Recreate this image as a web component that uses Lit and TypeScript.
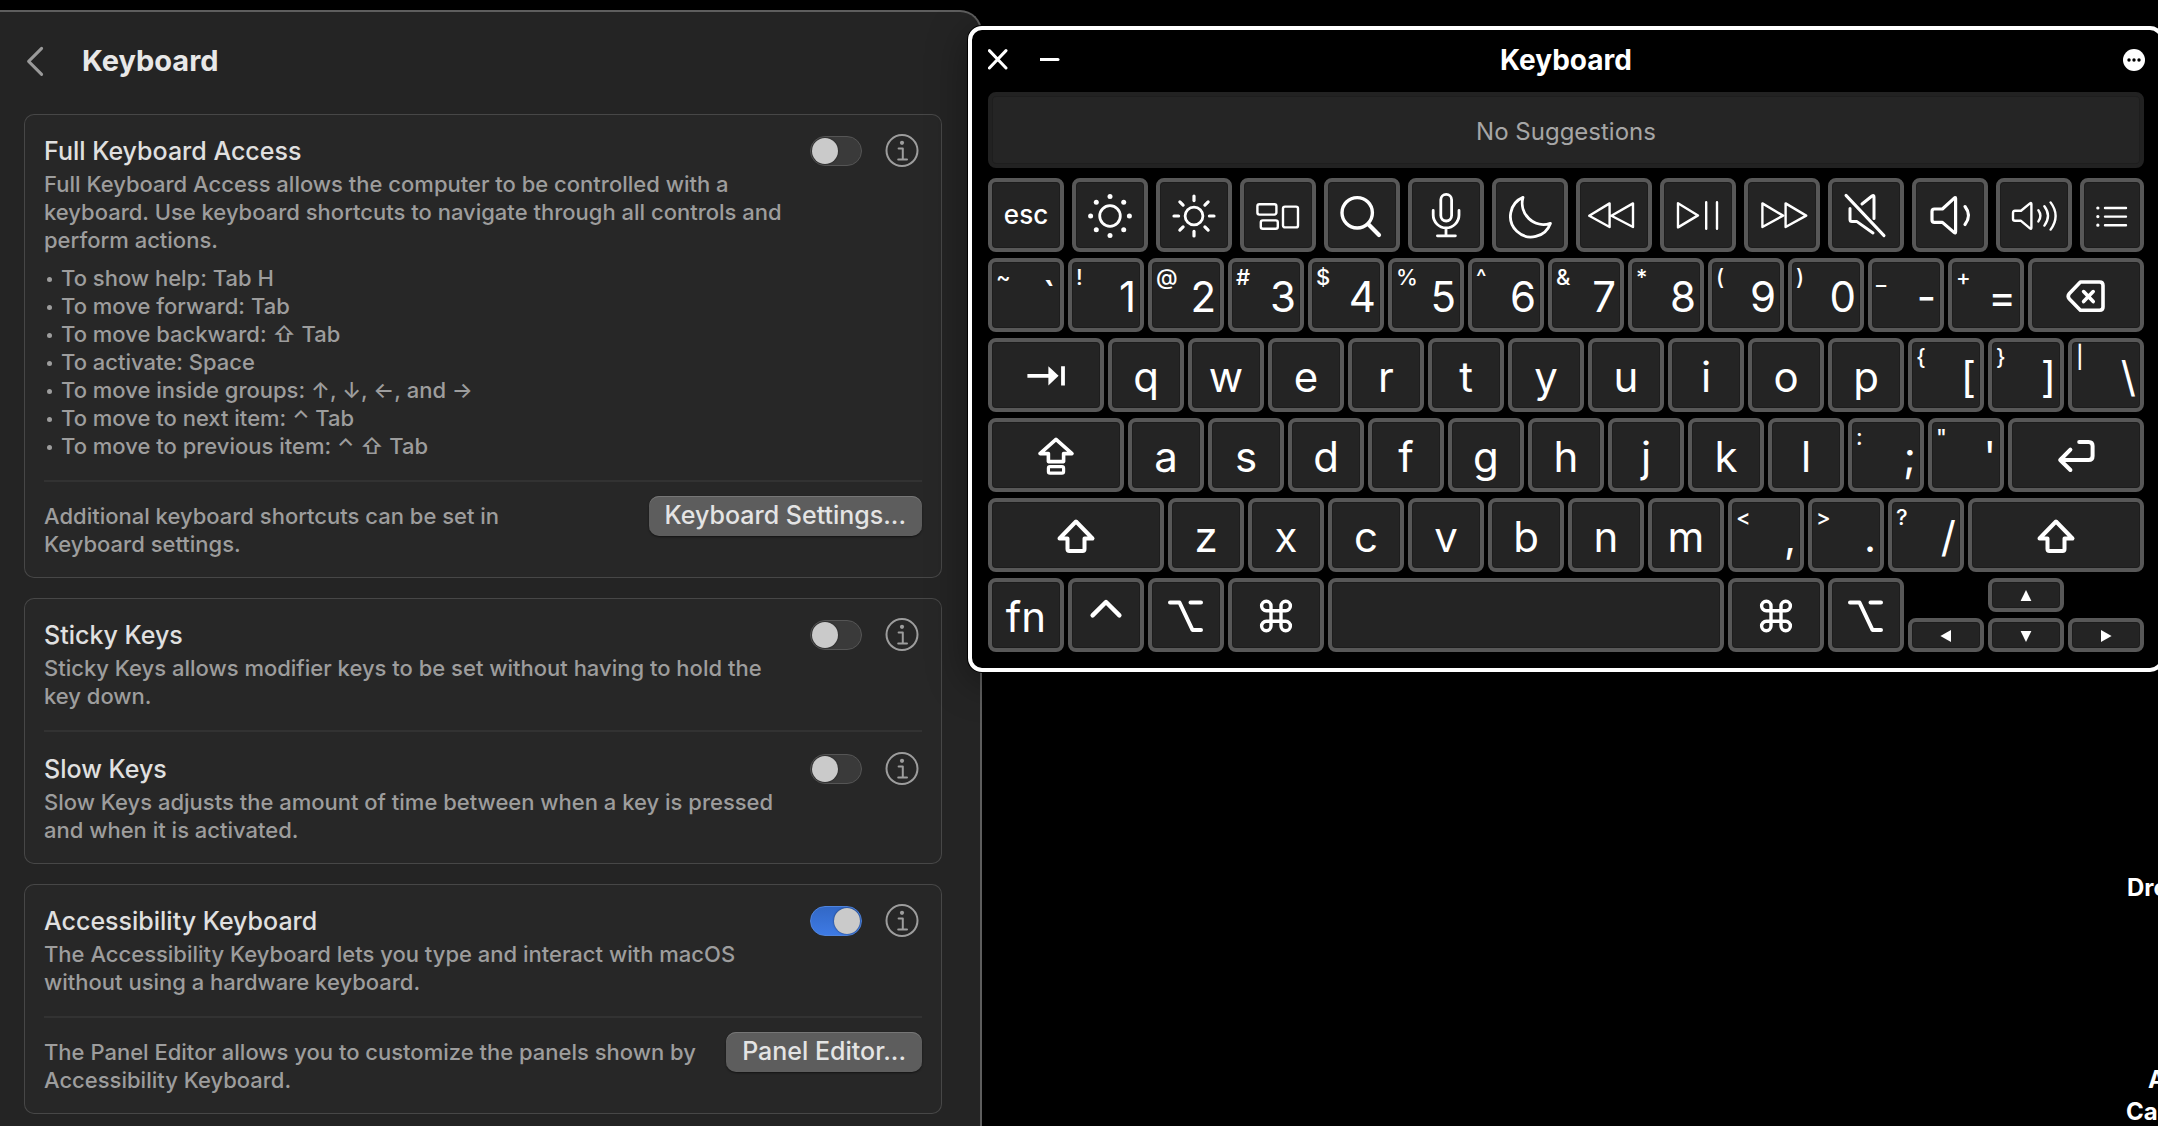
import { LitElement, html, svg, css, nothing, type TemplateResult, type SVGTemplateResult } from "lit";
import { customElement, property } from "lit/decorators.js";
import { classMap } from "lit/directives/class-map.js";
import { styleMap } from "lit/directives/style-map.js";

/* Key glyphs, drawn around the origin of a 56 x 56 box. */
const rays = (angles: number[], from: number, to: number) =>
  angles.map((a) => {
    const x = Math.cos((a * Math.PI) / 180);
    const y = Math.sin((a * Math.PI) / 180);
    return svg`<line x1=${x * from} y1=${y * from + 1} x2=${x * to} y2=${y * to + 1} />`;
  });

const EIGHT = [0, 45, 90, 135, 180, 225, 270, 315];

const shiftIcon = svg`<path stroke-width="4" d="M0 -13.5 L16.5 3.5 H8.5 V14 Q8.5 16 6.5 16 H-6.5 Q-8.5 16 -8.5 14 V3.5 H-16.5 Z" />`;
const commandIcon = svg`<path stroke-width="3.4" d="M5 -9 V11 a4.7 4.7 0 1 0 4.7 -4.7 H-9.7 a4.7 4.7 0 1 0 4.7 4.7 V-9 a4.7 4.7 0 1 0 -4.7 4.7 H9.7 a4.7 4.7 0 1 0 -4.7 -4.7 Z" />`;
const optionIcon = svg`<path stroke-width="4" d="M-16 -12.5 H-6.5 L6.5 15 H15 M4.5 -12.5 H15" />`;

const ICONS: Record<string, SVGTemplateResult> = {
  dim: svg`<circle cy="1" r="10.3" stroke-width="2.8" />${EIGHT.map((a) => {
    const x = 19.4 * Math.cos((a * Math.PI) / 180);
    const y = 19.4 * Math.sin((a * Math.PI) / 180) + 1;
    return svg`<circle class="solid" cx=${x} cy=${y} r="2.5" />`;
  })}`,
  bright: svg`<circle cy="1" r="8.9" stroke-width="2.8" /><g stroke-width="3.2">${rays(EIGHT, 15.4, 20)}</g>`,
  mission: svg`<g stroke-width="2.4"><rect x="-20.6" y="-10.8" width="19" height="10.4" rx="2" /><rect x="-17.2" y="5.4" width="17" height="8.4" rx="2" /><rect x="5" y="-8.4" width="15" height="20.8" rx="2" /></g>`,
  search: svg`<circle cx="-4.8" cy="-2.2" r="15.2" stroke-width="3.4" /><path stroke-width="4.2" d="M6.6 9.6 L17 20" />`,
  mic: svg`<g stroke-width="2.8"><rect x="-5.2" y="-20.6" width="10.8" height="26.6" rx="5.4" /><path d="M-12.8 -4.6 V0 a12.8 12.8 0 0 0 25.8 0 V-4.6 M0 13 V20.8 M-8.6 20.8 H9.4" /></g>`,
  moon: svg`<path stroke-width="2.8" d="M-7 -17.6 A20.6 20.6 0 1 0 20.4 8.4 A21.4 21.4 0 0 1 -7 -17.6 Z" />`,
  rewind: svg`<path stroke-width="2.4" d="M-4.4 -11.6 V12 L-24.8 0.8 Z M19 -11.6 V12 L-2.6 0.8 Z" />`,
  playpause: svg`<path stroke-width="2.4" d="M-20 -11.8 V12.4 L0 0.4 Z M8.2 -12.8 V13.8 M19 -12.8 V13.8" />`,
  forward: svg`<path stroke-width="2.4" d="M-19.6 -11.6 V12 L1 0.6 Z M3.6 -11.6 V12 L24.2 0.6 Z" />`,
  mute: svg`<g stroke-width="3"><path d="M-20 -19.6 L18 20.6 M-4 -11 L6 -19 Q8 -20.4 8 -18 V3.6 M-16 -6.6 V4.4 Q-16 6.4 -14 6.4 H-9.4 L7 18" /></g>`,
  voldown: svg`<g stroke-width="3.2"><path d="M5.6 -16.6 V16.8 Q5.6 18.8 4 17.4 L-7.6 7.4 H-15.6 Q-18 7.4 -18 5 V-3.6 Q-18 -6 -15.6 -6 H-7.6 L4 -16.6 Q5.6 -18 5.6 -16.6 Z" /><path d="M15 -8.4 Q22 0.6 15 9.6" /></g>`,
  volup: svg`<g stroke-width="2.4"><path d="M-2.6 -11 V12.6 Q-2.6 14.6 -4 13.4 L-13 5.8 H-19 Q-21 5.8 -21 3.8 V-2 Q-21 -4.2 -19 -4.2 H-13 L-4 -11.6 Q-2.6 -12.6 -2.6 -11 Z" /><path d="M4.4 -4.8 Q8.4 0.8 4.4 6.4 M10.4 -8.8 Q17.6 0.8 10.4 10.6 M16.6 -12.6 Q26.6 0.8 16.6 14.6" /></g>`,
  list: svg`<g stroke-width="2.4"><path d="M-7 -7 H14 M-7 1.6 H14 M-7 10.2 H14" /><path stroke-width="3.2" d="M-14.2 -7 h0.1 M-14.2 1.6 h0.1 M-14.2 10.2 h0.1" /></g>`,
  backspace: svg`<path stroke-width="3.6" d="M-5.6 -13 H13.6 Q17 -13 17 -9.6 V12 Q17 15.2 13.6 15.2 H-5.6 L-16.6 4 Q-19 1.2 -16.6 -1.6 Z M-2.4 -3.4 L7.2 6.6 M7.2 -3.4 L-2.4 6.6" />`,
  tab: svg`<path stroke-width="3.8" stroke-linecap="butt" d="M-18.6 0.8 H3 M17 -8.8 V10.4" /><path class="solid" d="M2.4 -8.8 L12.6 0.8 L2.4 10.4 Z" />`,
  caps: svg`<path stroke-width="3.6" d="M0 -15.6 L16 -1.4 H7.6 V6.6 H-7.6 V-1.4 H-16 Z" /><rect x="-7.6" y="11.6" width="15.2" height="6.6" rx="1.6" stroke-width="3.2" />`,
  enter: svg`<path stroke-width="4" d="M3.2 -13 H12.6 Q16.6 -13 16.6 -9 V1 Q16.6 5 12.6 5 H-15 M-5.6 -5.4 L-15.8 5 L-5.6 15" />`,
  shift: shiftIcon,
  control: svg`<path stroke-width="4.4" d="M-13.4 0.4 L0 -13 L13.4 0.4" />`,
  option: optionIcon,
  command: commandIcon,
  up: svg`<path class="solid" d="M0 -5 L5.4 6 H-5.4 Z" />`,
  down: svg`<path class="solid" d="M0 7 L5.4 -4 H-5.4 Z" />`,
  left: svg`<path class="solid" d="M-5.6 1 L5 -5 V7 Z" />`,
  right: svg`<path class="solid" d="M5.6 1 L-5 -5 V7 Z" />`,
};

interface Key {
  w: number;
  main?: string;
  sub?: string;
  icon?: string;
  label?: string;
  small?: boolean;
}

const icon = (name: string, label: string, w = 76): Key => ({ w, icon: name, label });
const plain = (chars: string): Key[] => [...chars].map((main) => ({ w: 76, main }));
const dual = (pairs: string): Key[] => pairs.split(" ").map((p) => ({ w: 76, sub: p[0], main: p[1] }));

const ROWS: Key[][] = [
  dual("~` !1 @2 #3 $4 %5 ^6 &7 *8 (9 )0 _- +=").concat(icon("backspace", "Delete", 116)),
  [icon("tab", "Tab", 116), ...plain("qwertyuiop"), ...dual("{[ }] |\\")],
  [icon("caps", "Caps Lock", 136), ...plain("asdfghjkl"), ...dual(":; \"'"), icon("enter", "Return", 136)],
  [icon("shift", "Left Shift", 176), ...plain("zxcvbnm"), ...dual("<, >. ?/"), icon("shift", "Right Shift", 176)],
];

const FUNCTION_ROW: Key[] = [
  { w: 76, main: "esc", small: true },
  icon("dim", "Brightness Down"),
  icon("bright", "Brightness Up"),
  icon("mission", "Mission Control"),
  icon("search", "Spotlight"),
  icon("mic", "Dictation"),
  icon("moon", "Do Not Disturb"),
  icon("rewind", "Rewind"),
  icon("playpause", "Play or Pause"),
  icon("forward", "Fast Forward"),
  icon("mute", "Mute"),
  icon("voldown", "Volume Down"),
  icon("volup", "Volume Up"),
  icon("list", "Panels", 64),
];

const BOTTOM_ROW: Key[] = [
  { w: 76, main: "fn" },
  icon("control", "Control"),
  icon("option", "Left Option"),
  icon("command", "Left Command", 96),
  { w: 396, label: "Space" },
  icon("command", "Right Command", 96),
  icon("option", "Right Option"),
];

@customElement("accessibility-keyboard")
export class AccessibilityKeyboard extends LitElement {
  static styles = css`
    :host {
      display: flex;
      flex-direction: column;
      box-sizing: border-box;
      border: 4px solid #fff;
      border-radius: 14px;
      background: #000;
      padding: 0 16px 16px;
      color: #fff;
      box-shadow: 0 0 0 1px #000, 0 8px 40px rgba(0, 0, 0, 0.4);
    }
    .bar {
      display: grid;
      grid-template-columns: 1fr auto 1fr;
      align-items: center;
      height: 60px;
      margin-bottom: 2px;
    }
    .bar h2 {
      margin: 0;
      font-size: 28px;
      line-height: 34px;
      font-weight: 700;
    }
    .left {
      display: flex;
      gap: 28px;
    }
    .tool {
      display: block;
      padding: 0;
      border: 0;
      background: none;
      width: 24px;
      height: 24px;
    }
    .tool.more {
      justify-self: end;
    }
    .suggestions {
      box-sizing: border-box;
      height: 76px;
      border: 4px solid #222;
      border-radius: 8px;
      background: #252525;
      box-shadow: inset 0 0 0 1px #1e1e1e;
      display: flex;
      align-items: center;
      justify-content: center;
      margin-bottom: 10px;
      font-size: 24px;
      line-height: 28px;
      color: #a6a6a6;
      padding-top: 4px;
    }
    .rows {
      display: flex;
      flex-direction: column;
      gap: 6px;
    }
    .row {
      display: flex;
      gap: 4px;
      height: 74px;
    }
    .row.functions {
      gap: 8px;
    }
    .key {
      box-sizing: border-box;
      min-width: 0;
      min-height: 0;
      margin: 0;
      border: 4px solid #585858;
      border-radius: 8px;
      background: #242424;
      box-shadow: inset 0 0 0 1px #1d1d1d;
      padding: 0;
      display: flex;
      align-items: center;
      justify-content: center;
      overflow: hidden;
      font-family: inherit;
      color: #fff;
    }
    .key svg {
      flex: none;
    }
    .main {
      font-size: 42px;
      line-height: 62px;
      padding-top: 4px;
    }
    .small .main {
      font-size: 26px;
      font-weight: 500;
      padding-top: 0;
    }
    .dual {
      justify-content: space-between;
      align-items: flex-start;
      padding: 0 4px;
    }
    .sub {
      font-size: 22px;
      line-height: 30px;
      font-weight: 500;
    }
    .arrows {
      flex: 236 1 236px;
      display: grid;
      grid-template-columns: repeat(3, 1fr);
      grid-template-rows: 34px 34px;
      gap: 6px 4px;
      grid-template-areas: ". up ." "left down right";
    }
    .up {
      grid-area: up;
    }
    .left-arrow {
      grid-area: left;
    }
    .down {
      grid-area: down;
    }
    .right {
      grid-area: right;
    }
    .glyph {
      fill: none;
      stroke: #fff;
      stroke-linecap: round;
      stroke-linejoin: round;
    }
    .solid {
      fill: #fff;
      stroke: none;
    }
  `;

  private glyph(name: string): TemplateResult {
    return html`<svg class="glyph" width="56" height="56" viewBox="-28 -28 56 56" aria-hidden="true">${ICONS[name]}</svg>`;
  }

  private key(k: Key): TemplateResult {
    return html`<button
      type="button"
      class=${classMap({ key: true, dual: !!k.sub, small: !!k.small })}
      style=${styleMap({ flex: `${k.w} 1 ${k.w}px` })}
      aria-label=${k.label ?? nothing}
    >${k.sub ? html`<span class="sub">${k.sub}</span>` : nothing}${k.main
        ? html`<span class="main">${k.main}</span>`
        : nothing}${k.icon ? this.glyph(k.icon) : nothing}</button>`;
  }

  private arrow(area: string, name: string, label: string): TemplateResult {
    return html`<button type="button" class="key ${area}" aria-label=${label}>${this.glyph(name)}</button>`;
  }

  render() {
    return html`
      <div class="bar">
        <div class="left">
          <button class="tool" type="button" aria-label="Close">
            <svg class="glyph" width="24" height="24" viewBox="0 0 24 24"><path stroke-width="3" d="M1.4 2.6 L18 20 M18 2.6 L1.4 20" /></svg>
          </button>
          <button class="tool" type="button" aria-label="Minimize">
            <svg class="glyph" width="24" height="24" viewBox="0 0 24 24"><path stroke-width="3" d="M0.6 11.5 H18" /></svg>
          </button>
        </div>
        <h2>Keyboard</h2>
        <button class="tool more" type="button" aria-label="More">
          <svg width="26" height="24" viewBox="0 0 26 24"><circle cx="14" cy="12" r="11" fill="#fff" /><circle cx="9" cy="12" r="1.7" /><circle cx="14" cy="12" r="1.7" /><circle cx="19" cy="12" r="1.7" /></svg>
        </button>
      </div>
      <div class="suggestions">No Suggestions</div>
      <div class="rows">
        <div class="row functions">${FUNCTION_ROW.map((k) => this.key(k))}</div>
        ${ROWS.map((r) => html`<div class="row">${r.map((k) => this.key(k))}</div>`)}
        <div class="row">
          ${BOTTOM_ROW.map((k) => this.key(k))}
          <div class="arrows">
            ${this.arrow("up", "up", "Up")} ${this.arrow("left-arrow", "left", "Left")}
            ${this.arrow("down", "down", "Down")} ${this.arrow("right", "right", "Right")}
          </div>
        </div>
      </div>
    `;
  }
}

@customElement("setting-row")
export class SettingRow extends LitElement {
  @property() heading = "";
  @property() text = "";
  @property({ type: Boolean }) on = false;
  @property({ attribute: false }) items: string[] = [];

  static styles = css`
    :host {
      display: flex;
      align-items: flex-start;
      padding: 20px 3px 20px 0;
    }
    .body {
      flex: 1;
      min-width: 0;
      margin-right: 22px;
    }
    .title {
      display: block;
      font-size: 25px;
      line-height: 34px;
      font-weight: 500;
      color: #e0e0e0;
    }
    .text {
      margin: 2px 0 0;
      font-size: 22px;
      line-height: 28px;
      color: #9d9d9d;
    }
    .list {
      list-style: none;
      margin: 10px 0 0;
      padding: 0;
      font-size: 22px;
      line-height: 28px;
      color: #9d9d9d;
    }
    .list li {
      display: flex;
      align-items: center;
    }
    .list li::before {
      content: "";
      width: 5px;
      height: 5px;
      border-radius: 50%;
      background: #9d9d9d;
      margin: 2px 9px 0 3px;
    }
    .switch {
      appearance: none;
      box-sizing: border-box;
      flex: none;
      width: 52px;
      height: 30px;
      margin: 2px 0 0;
      border: 1px solid #555;
      border-radius: 15px;
      background: #3a3a3a;
      padding: 1px;
      display: flex;
    }
    .switch::before {
      content: "";
      width: 26px;
      height: 26px;
      border-radius: 50%;
      background: #cacaca;
      box-shadow: 0 0 2px rgba(0, 0, 0, 0.6);
    }
    .switch:checked {
      justify-content: flex-end;
      border-color: #4f84dd;
      background: linear-gradient(#3268c6, #3e7ae4);
    }
    .info {
      flex: none;
      margin-left: 23px;
      border: 0;
      padding: 0;
      background: none;
      width: 34px;
      height: 34px;
    }
    .info svg {
      display: block;
    }
  `;

  render() {
    return html`
      <div class="body">
        <label class="title" for="toggle">${this.heading}</label>
        <p class="text">${this.text}</p>
        ${this.items.length
          ? html`<ul class="list">
              ${this.items.map((i) => html`<li>${i}</li>`)}
            </ul>`
          : nothing}
      </div>
      <input id="toggle" class="switch" type="checkbox" role="switch" .checked=${this.on} />
      <button class="info" type="button" aria-label="About ${this.heading}">
        <svg width="34" height="34" viewBox="-17 -17 34 34" fill="none" stroke="#9d9d9d" stroke-width="2">
          <circle r="15.5" cy="-0.4" />
          <circle cy="-8.2" r="2.1" fill="#9d9d9d" stroke="none" />
          <path d="M-3.4 -2.4 H0.8 V8.4 M-3.8 8.4 H5" stroke-linecap="round" stroke-linejoin="round" />
        </svg>
      </button>
    `;
  }
}

@customElement("settings-pane")
export class SettingsPane extends LitElement {
  static styles = css`
    :host {
      display: block;
      box-sizing: border-box;
      border: solid #5e5e5e;
      border-width: 2px 2px 0 0;
      border-top-right-radius: 22px;
      background: #242424;
      padding: 0 38px 0 24px;
      font-weight: 500;
    }
    .head {
      display: flex;
      align-items: center;
      height: 102px;
      box-sizing: border-box;
      padding-bottom: 4px;
    }
    .back {
      border: 0;
      background: none;
      padding: 0;
      width: 24px;
      height: 32px;
      margin: 0 34px 0 0;
    }
    .back svg {
      display: block;
    }
    h1 {
      margin: 0;
      font-size: 29px;
      line-height: 36px;
      font-weight: 700;
      color: #e8e8e8;
    }
    .cards {
      display: flex;
      flex-direction: column;
      gap: 20px;
    }
    .card {
      border-radius: 10px;
      background: #272727;
      box-shadow: inset 0 0 0 1px #474747;
      padding: 0 20px;
    }
    .divider {
      margin: 0;
      border: 0;
      height: 2px;
      background: #323232;
    }
    .extra {
      display: flex;
      align-items: flex-start;
      justify-content: space-between;
      gap: 30px;
      padding: 14px 0 20px;
    }
    .extra p {
      margin: 6px 0 0;
      font-size: 22px;
      line-height: 28px;
      color: #9d9d9d;
    }
    .extra .short {
      max-width: 520px;
    }
    .push {
      flex: none;
      height: 40px;
      border: 0;
      border-radius: 10px;
      background: #5d5d5d;
      box-shadow: inset 0 1px 0 #767676, 0 1px 2px rgba(0, 0, 0, 0.5);
      padding: 0 16px 2px;
      font-family: inherit;
      font-size: 25px;
      line-height: 32px;
      font-weight: 500;
      color: #e4e4e4;
    }
  `;

  private items = [
    "To show help: Tab H",
    "To move forward: Tab",
    "To move backward: ⇧ Tab",
    "To activate: Space",
    "To move inside groups: ↑, ↓, ←, and →",
    "To move to next item: ⌃ Tab",
    "To move to previous item: ⌃ ⇧ Tab",
  ];

  render() {
    return html`
      <header class="head">
        <button class="back" type="button" aria-label="Back">
          <svg width="24" height="32" viewBox="0 0 24 32" fill="none" stroke="#9a9a9a" stroke-width="3" stroke-linecap="round" stroke-linejoin="round"><path d="M17.6 3.4 L4.6 16.4 L17.6 29.4" /></svg>
        </button>
        <h1>Keyboard</h1>
      </header>
      <div class="cards">
        <section class="card">
          <setting-row
            heading="Full Keyboard Access"
            text="Full Keyboard Access allows the computer to be controlled with a keyboard. Use keyboard shortcuts to navigate through all controls and perform actions."
            .items=${this.items}
          ></setting-row>
          <hr class="divider" />
          <div class="extra">
            <p class="short">Additional keyboard shortcuts can be set in Keyboard settings.</p>
            <button class="push" type="button">Keyboard Settings...</button>
          </div>
        </section>
        <section class="card">
          <setting-row
            heading="Sticky Keys"
            text="Sticky Keys allows modifier keys to be set without having to hold the key down."
          ></setting-row>
          <hr class="divider" />
          <setting-row
            heading="Slow Keys"
            text="Slow Keys adjusts the amount of time between when a key is pressed and when it is activated."
          ></setting-row>
        </section>
        <section class="card">
          <setting-row
            heading="Accessibility Keyboard"
            text="The Accessibility Keyboard lets you type and interact with macOS without using a hardware keyboard."
            on
          ></setting-row>
          <hr class="divider" />
          <div class="extra">
            <p>The Panel Editor allows you to customize the panels shown by Accessibility Keyboard.</p>
            <button class="push" type="button">Panel Editor...</button>
          </div>
        </section>
      </div>
    `;
  }
}

@customElement("app-root")
export class AppRoot extends LitElement {
  static styles = css`
    :host {
      display: block;
      position: relative;
      box-sizing: border-box;
      height: 100vh;
      padding-top: 10px;
      overflow: hidden;
      background: #000;
      font-family: Inter, "Liberation Sans", sans-serif;
    }
    .settings {
      width: min(982px, 100%);
      min-height: 100%;
    }
    .keyboard {
      position: absolute;
      left: 968px;
      right: -6px;
      top: 26px;
    }
    .file {
      position: absolute;
      font-size: 24px;
      line-height: 32px;
      font-weight: 700;
      color: #fff;
      white-space: nowrap;
    }
    .first {
      left: calc(100% - 31px);
      top: 872px;
    }
    .second {
      left: calc(100% - 32px);
      top: 1064px;
    }
    .second span {
      display: block;
      padding-left: 22px;
    }
  `;

  render() {
    return html`
      <settings-pane class="settings"></settings-pane>
      <accessibility-keyboard class="keyboard"></accessibility-keyboard>
      <div class="file first">Dro</div>
      <div class="file second"><span>A</span>Ca</div>
    `;
  }
}
